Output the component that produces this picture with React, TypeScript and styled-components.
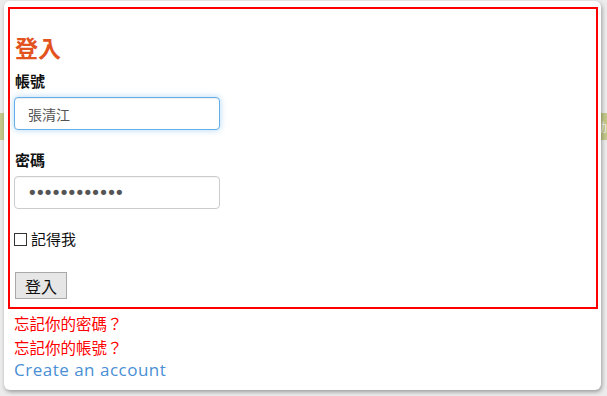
import styled, { createGlobalStyle } from "styled-components"

const GlobalStyle = createGlobalStyle`
  html, body { margin: 0; padding: 0; }
  body {
    width: 607px; height: 396px; overflow: hidden;
    background: #ececec;
    font-family: "Noto Sans CJK TC", "Noto Sans", sans-serif;
  }
`

const cjk = `"Noto Sans CJK TC", "Noto Sans CJK SC", sans-serif`

/* page that sits behind the popup */
const Page = styled.div`
  position: relative; width: 607px; height: 396px;
  display: flex; flex-direction: column;
  padding-top: 113px; box-sizing: border-box;
`

const Band = styled.div`
  height: 27px; background: #c4c98a;
  color: #f4f4f4; font: 12px ${cjk};
  display: flex; align-items: center; justify-content: flex-end;
`

/* popup */
const Popup = styled.div`
  position: absolute; left: 4px; top: 1px;
  width: 597px; height: 389px; box-sizing: border-box;
  background: #fff; border-radius: 6px;
  box-shadow: 1px 2px 4px rgba(0, 0, 0, 0.35);
  padding: 6px 3px 0 4px;
`

const LoginBox = styled.form`
  border: 2px solid #ff0000;
  height: 302px; box-sizing: border-box;
  padding: 0 4px;
  display: flex; flex-direction: column; align-items: flex-start;
`

const Title = styled.h2`
  margin: 24px 0 0 1px;
  font: bold 23px/28px ${cjk};
  color: #e2531d;
`

const Label = styled.label<{ $top: number }>`
  margin: ${(p) => p.$top}px 0 0 1px;
  font: bold 15px/20px ${cjk};
  color: #111;
`

const Input = styled.input<{ $focused?: boolean }>`
  margin-top: 6px;
  width: 206px; height: 33px; box-sizing: border-box;
  padding: 0 13px;
  border: 1px solid ${(p) => (p.$focused ? "#66afe9" : "#cccccc")};
  border-radius: 4px;
  box-shadow: ${(p) =>
    p.$focused
      ? "inset 0 1px 1px rgba(0,0,0,.075), 0 0 6px rgba(102,175,233,.5)"
      : "inset 0 1px 1px rgba(0,0,0,.05)"};
  font: 14px ${cjk};
  color: #555;
  outline: none;
  &[type="password"] {
    font: 18px "DejaVu Sans", sans-serif;
    letter-spacing: -2.7px;
    padding-left: 12px;
  }
`

const Remember = styled.label`
  margin-top: 20px;
  display: flex; align-items: center; gap: 4px;
  font: 15px/20px ${cjk};
  color: #111;
`

const Check = styled.span`
  width: 11px; height: 11px;
  border: 1px solid #333; background: #fff;
`

const Submit = styled.button`
  margin: 23px 0 0 1px;
  width: 52px; height: 27px;
  background: #e6e6e6; border: 1px solid #a8a8a8;
  font: 16px ${cjk}; color: #111;
  padding: 0;
`

const Links = styled.div`
  padding: 2px 0 0 6px;
  display: flex; flex-direction: column;
`

const Forgot = styled.a`
  font: 15.5px/24px ${cjk};
  color: #ff0000; text-decoration: none;
`

const Create = styled.a`
  font: 17px/22px "Open Sans", sans-serif;
  letter-spacing: 0.5px;
  color: #4a8fd4; text-decoration: none;
`

export default function App() {
  return (
    <>
      <GlobalStyle />
      <Page>
        <Band>活動</Band>

        <Popup>
          <LoginBox onSubmit={(e) => e.preventDefault()}>
            <Title>登入</Title>
            <Label $top={10}>帳號</Label>
            <Input $focused defaultValue="張清江" />
            <Label $top={20}>密碼</Label>
            <Input type="password" defaultValue="abcdefghijkl" />
            <Remember>
              <Check />
              記得我
            </Remember>
            <Submit type="submit">登入</Submit>
          </LoginBox>
          <Links>
            <Forgot href="#">忘記你的密碼？</Forgot>
            <Forgot href="#">忘記你的帳號？</Forgot>
            <Create href="#">Create an account</Create>
          </Links>
        </Popup>
      </Page>
    </>
  )
}
